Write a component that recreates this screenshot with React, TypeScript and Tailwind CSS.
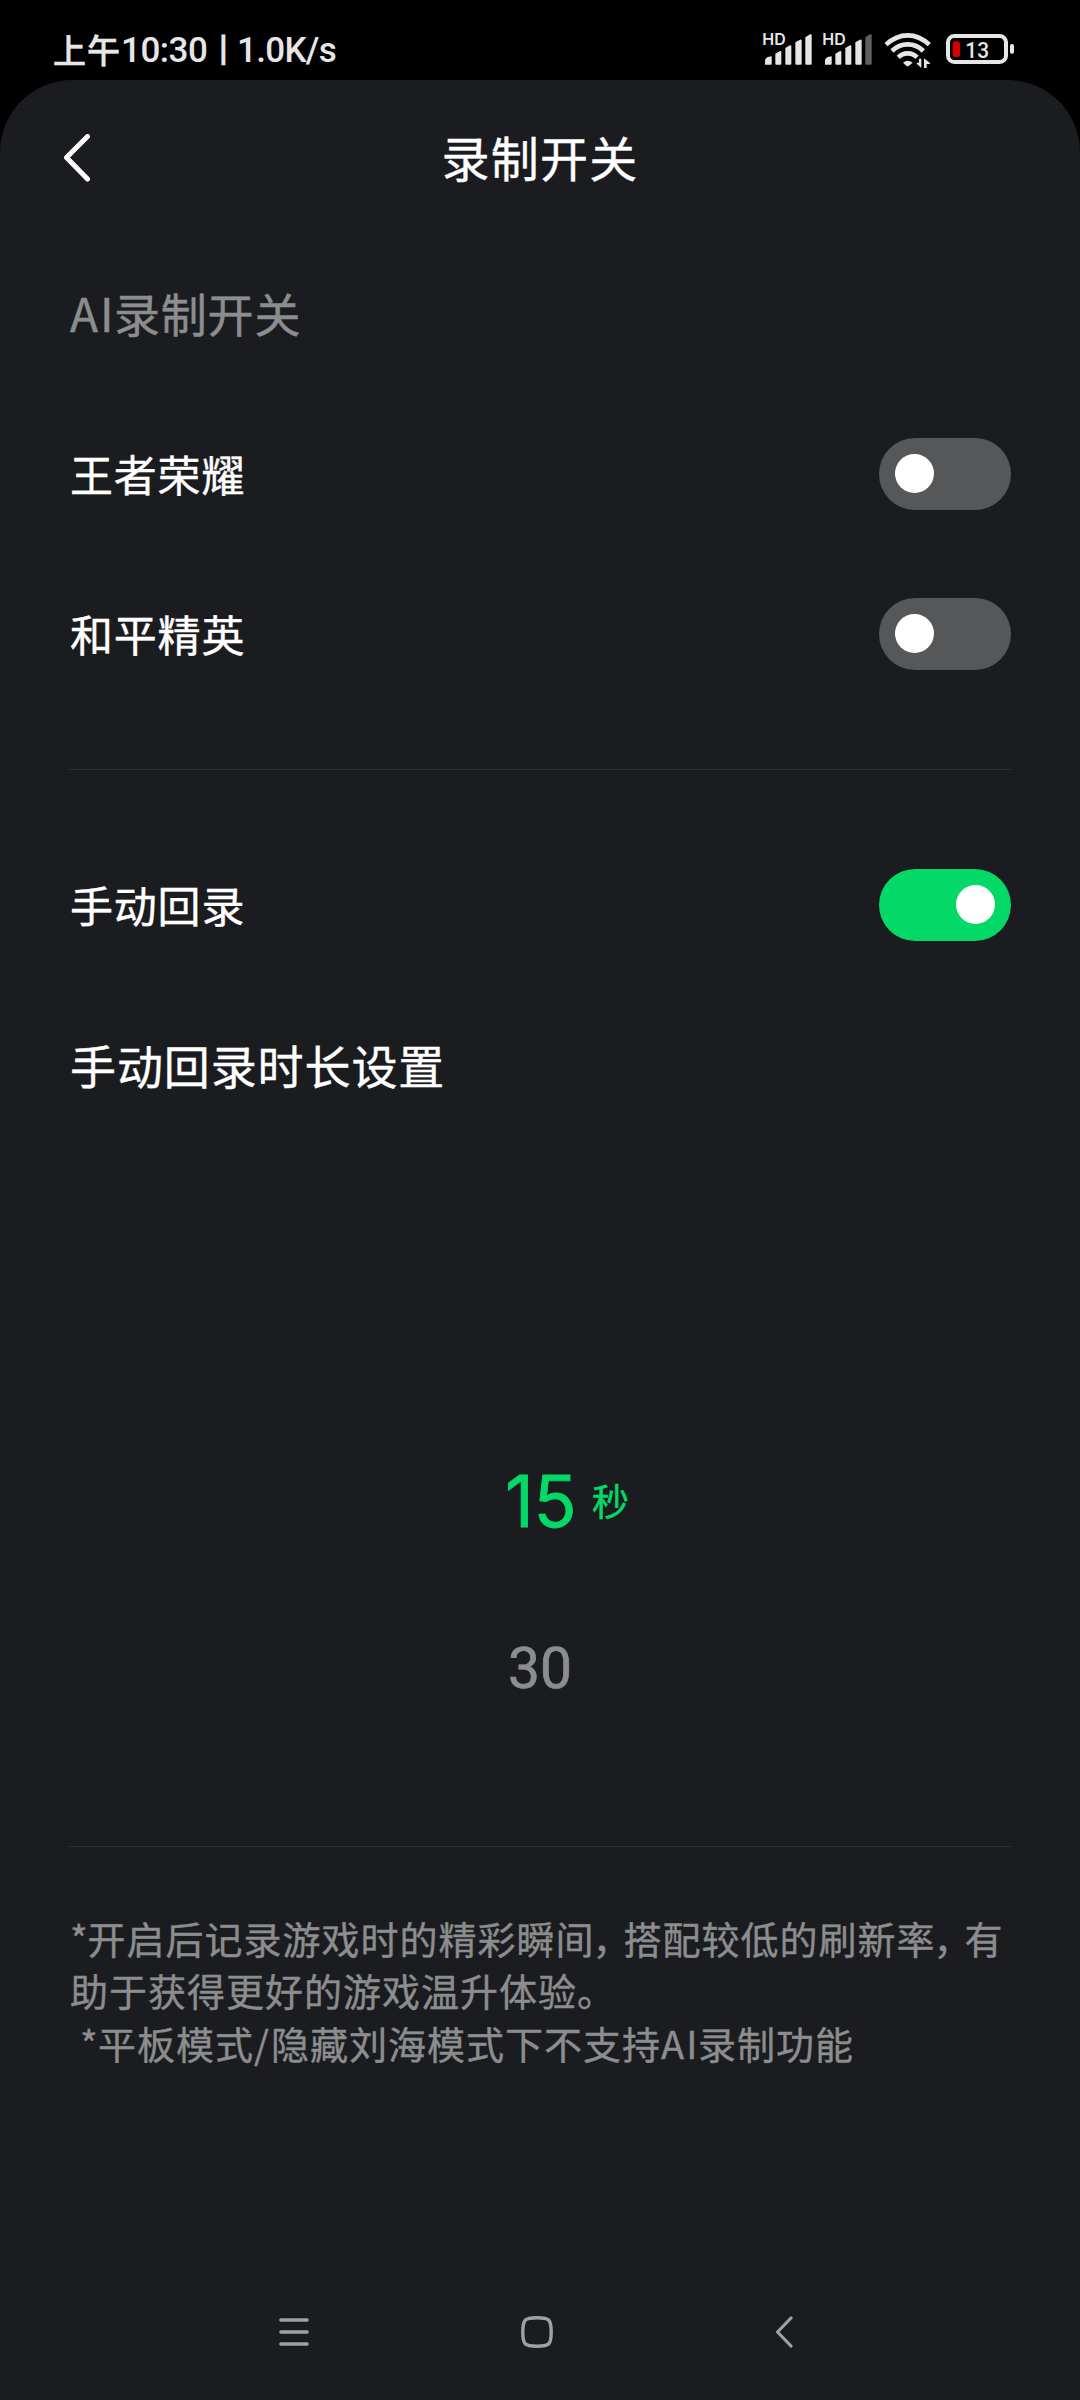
import React, { useState } from "react";

const CJK = "font-['Noto_Sans_CJK_SC',sans-serif]";
const INTER = "font-['Inter','Noto_Sans_CJK_SC',sans-serif]";
const ROBOTO = "font-['Roboto','Noto_Sans_CJK_SC',sans-serif]";

function Signal({ full }: { full: boolean }) {
  return (
    <svg className="-mt-2 h-[42px] w-[52px]" viewBox="0 -24 156 126" fill="#e6e6e6">
      <text x="1" y="39" fontFamily="Inter" fontSize="46" fontWeight="600" textLength="70" lengthAdjust="spacingAndGlyphs">HD</text>
      <path d="M9 98V85Q10 79 17 75L29 73V95Q29 98 26 98H12Q9 98 9 98Z" />
      <path d="M40 95V65L54 57Q58 56 58 60V95Q58 98 55 98H43Q40 98 40 95Z" />
      <path d="M70 95V48L84 40Q88 39 88 43V95Q88 98 85 98H73Q70 98 70 95Z" />
      <path d="M100 95V31L114 23Q119 22 119 26V95Q119 98 116 98H103Q100 98 100 95Z" />
      <path fill={full ? "#e6e6e6" : "#5f5f5f"} d="M130 95V16L144 7Q149 5 149 10V95Q149 98 146 98H133Q130 98 130 95Z" />
    </svg>
  );
}

function Wifi() {
  return (
    <svg className="h-[36px] w-[48px]" viewBox="0 0 144 108" fill="none" stroke="#e6e6e6">
      <path strokeWidth="14" d="M6 38Q36 10 71 10T136 38" />
      <path strokeWidth="14" d="M24 57Q44 37 71 37T118 57" />
      <path strokeWidth="14" d="M43 76Q54 64 71 64T99 76" />
      <path fill="#e6e6e6" stroke="none" d="M57 92Q71 80 86 92L74 102Q71 104 68 102Z" />
      <path fill="#e6e6e6" stroke="none" d="M105 80H112V108L98 95V92H105Z" />
      <path fill="#e6e6e6" stroke="none" d="M120 108V79L138 93V96H128V108Z" />
    </svg>
  );
}

function Battery() {
  return (
    <svg className="h-[30px] w-[68px]" viewBox="0 0 204 90">
      <rect x="6" y="6" width="174" height="78" rx="19" fill="none" stroke="#e6e6e6" strokeWidth="12" />
      <rect x="192" y="30" width="12" height="29" rx="5" fill="#e6e6e6" />
      <rect x="20" y="22" width="22" height="47" rx="8" fill="#d20000" />
      <text x="58" y="71" fill="#e6e6e6" fontFamily="Roboto" fontSize="67" fontWeight="500" textLength="71" lengthAdjust="spacingAndGlyphs">13</text>
    </svg>
  );
}

function StatusBar() {
  return (
    <header className="flex h-20 items-start justify-between pl-[53px] pr-[66px] text-[#e6e6e6]">
      <div className={`${ROBOTO} flex items-center whitespace-nowrap pt-[25px] text-[35px] leading-[48px] font-medium`}>
        <span className={`${CJK} w-[68px] pb-px text-[33px] leading-[47px] tracking-[1px] [-webkit-text-stroke:0.5px_#e6e6e6]`}>上午</span>
        <span className="w-[98px] pt-px leading-[49px] tracking-[-0.5px]">10:30</span>
        <span className="mr-[9px] h-[48px] w-[9px] text-[35px] leading-[46px] [-webkit-text-stroke:1px_#e6e6e6]">|</span>
        <span className="pt-px leading-[49px] tracking-[-0.7px]">1.0K/s</span>
      </div>
      <div className="flex items-start pt-8">
        <Signal full />
        <div className="ml-2"><Signal full={false} /></div>
        <div className="ml-[10px]"><Wifi /></div>
        <div className="ml-[14px] pt-[2px]"><Battery /></div>
      </div>
    </header>
  );
}

function Toggle({ initial }: { initial: boolean }) {
  const [on, setOn] = useState(initial);
  return (
    <button
      role="switch"
      aria-checked={on}
      onClick={() => setOn(!on)}
      className={`flex h-[72px] w-[132px] items-start rounded-full px-4 pt-4 ${on ? "justify-end bg-[#04d968]" : "justify-start bg-[#565758]"}`}
    >
      <span className="size-[39px] rounded-full bg-white" />
    </button>
  );
}

function SettingRow({ label, initial }: { label: string; initial: boolean }) {
  return (
    <div className="flex h-[72px] items-center justify-between">
      <span className="pb-px pl-px text-[43px] leading-[71px] tracking-[0.8px] [-webkit-text-stroke:0.4px_white]">{label}</span>
      <Toggle initial={initial} />
    </div>
  );
}

/** Full-width comma set tighter than a full character cell. */
function Comma() {
  return <span className="-ml-[2px] mr-[2px] tracking-[-9px]">，</span>;
}

export default function App() {
  return (
    <div lang="zh-CN" className="h-[2400px] w-[1080px] overflow-hidden bg-black">
      <StatusBar />
      <main className={`${CJK} flex h-[2320px] flex-col rounded-t-[72px] bg-[#1b1c1f] text-white`}>
        <div className="grid h-[152px] grid-cols-[120px_1fr_120px] items-center">
          <svg className="ml-[63px] mt-[3px] h-[48px] w-[30px]" viewBox="0 0 30 48" fill="none" stroke="white" strokeWidth="5" strokeLinecap="round" strokeLinejoin="round">
            <path d="M24.500 2.500L3.500 23.500L24.500 45" />
          </svg>
          <h1 className="text-center text-[48px] leading-[72px] tracking-[1.2px] [-webkit-text-stroke:0.4px_white]">录制开关</h1>
        </div>

        <section className="px-[69px]">
          <h2 className="mt-[44px] flex h-[73px] text-[46px] leading-[72px] tracking-[0.8px] text-[#8c8d8e] [-webkit-text-stroke:0.5px_#8c8d8e]">
            <span className="w-[45px] pl-px tracking-[2px]">AI</span>录制开关
          </h2>
          <div className="mt-[89px] flex flex-col gap-[88px]">
            <SettingRow label="王者荣耀" initial={false} />
            <SettingRow label="和平精英" initial={false} />
          </div>
          <hr className="mt-[99px] border-[#303134]" />
          <div className="mt-[99px]">
            <SettingRow label="手动回录" initial />
          </div>
          <p className="mt-[87px] pl-px text-[46px] leading-[72px] tracking-[0.9px] [-webkit-text-stroke:0.4px_white]">手动回录时长设置</p>
        </section>

        <section className="mt-[361px] text-center">
          <div className="grid h-[80px] grid-cols-[1fr_70px_1fr] items-center leading-[80px] text-[#04d968]">
            <span className={`${INTER} col-start-2 whitespace-nowrap text-[71px] tracking-[-0.5px] [-webkit-text-stroke:0.8px_#04d968]`}>15</span>
            <span className="pb-px pl-[17px] text-left text-[37px] leading-[79px] [-webkit-text-stroke:0.5px_#04d968]">秒</span>
          </div>
          <div className={`${ROBOTO} mt-[88px] h-[79px] text-[57px] leading-[80px] text-[#8c8d8e] [-webkit-text-stroke:0.7px_#8c8d8e]`}>30</div>
        </section>

        <section className="mt-[138px] px-[69px]">
          <hr className="border-[#303134]" />
          <div className="mt-[65px] whitespace-pre pl-px text-[38px] leading-[52.3px] tracking-[1px] text-[#8c8d8e] [-webkit-text-stroke:0.4px_#8c8d8e]">
            <p><span className="inline-block w-[17.500px]">*</span>开启后记录游戏时的精彩瞬间<Comma />搭配较低的刷新率<Comma />有</p>
            <p>助于获得更好的游戏温升体验。</p>
            <p className="pl-[10px]"><span className="inline-block w-[18px]">*</span>平板模式<span className="inline-block w-[17px]">/</span>隐藏刘海模式下不支持<span className="inline-block w-[37px] tracking-[2px]">AI</span>录制功能</p>
          </div>
        </section>

        <nav className="mt-auto flex h-[136px] items-center pl-[279px]">
          <svg className="h-[32px] w-[30px]" viewBox="0 0 30 32" stroke="#a0a1a3" strokeWidth="3.6" strokeLinecap="round">
            <path d="M2 4H28M2 16H28M2 28H28" />
          </svg>
          <svg className="ml-[212px] h-[32px] w-[32px]" viewBox="0 0 32 32" fill="none" stroke="#a0a1a3" strokeWidth="3.4">
            <path d="M16 1.800C28.500 1.800 30.200 3.500 30.200 16S28.500 30.200 16 30.200S1.800 28.500 1.800 16S3.500 1.800 16 1.800Z" />
          </svg>
          <svg className="ml-[222px] h-[32px] w-[18px]" viewBox="0 0 18 32" fill="none" stroke="#a0a1a3" strokeWidth="3.2" strokeLinecap="round" strokeLinejoin="round">
            <path d="M16 2L2.500 16L16 30" />
          </svg>
        </nav>
      </main>
    </div>
  );
}
